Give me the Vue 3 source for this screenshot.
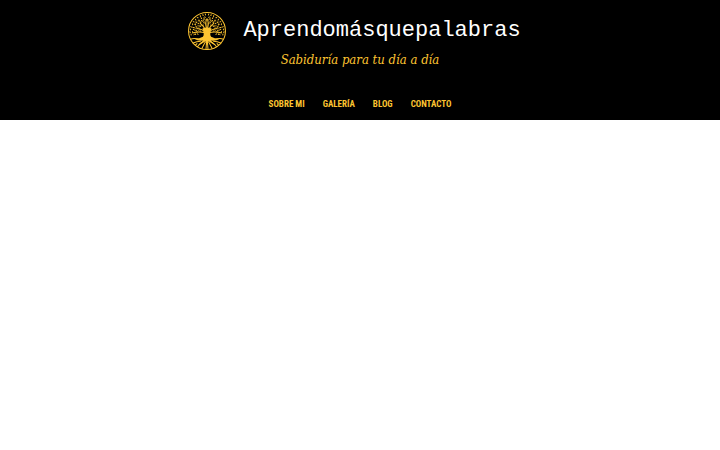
<template>
  <header class="header">
    <div class="brand">
      <svg class="logo" viewBox="0 0 78 78" role="img" aria-label="Árbol">
        <circle cx="39" cy="39" r="36" class="ring" />
        <path class="trunk" d="M30 34 Q39 30 48 34 Q43 45 47 50 Q53 54 64 54 Q54 60 46 57 Q51 61 56 67 Q47 63 42 59 L40 66 L38 66 L36 59 Q31 63 22 67 Q26 61 32 57 Q24 60 14 54 Q25 54 31 50 Q35 45 30 34Z" />
        <g v-for="side in sides" :key="side" :transform="side">
          <path class="branch" d="M37 43 Q31 35 19 34 M37 38 Q32 29 25 23 M38 35 Q35 24 38 15 M36 43 Q25 39 10 43" />
          <path class="twig" d="M37 25 L31 17 M37 19 L32 12 M30 28 L20 28 M27 25 L23 16 M25 35 L16 28 M20 35 L9 31 M22 41 L13 37 M20 41 L12 47 M33 32 L31 25 M25 36 L20 40 M33 19 L29 21 M20 21 L15 25 M23 29 L24 32" />
          <path class="root" d="M24 56 Q15 52 7 55 M27 59 Q19 59 11 63 M29 62 Q22 66 20 70 M36 60 Q32 67 29 73 M38 62 L37 75 M20 63 L16 67" />
          <g class="leaves">
            <ellipse v-for="leaf in leaves" :key="leaf.join()" :cx="leaf[0]" :cy="leaf[1]" rx="2" ry="1" :transform="`rotate(${leaf[2]} ${leaf[0]} ${leaf[1]})`" />
          </g>
        </g>
      </svg>
      <h1 class="title">Aprendomásquepalabras</h1>
    </div>
    <p class="slogan">Sabiduría para tu día a día</p>
    <nav class="menu">
      <a v-for="link in links" :key="link.href" :href="link.href">{{ link.text }}</a>
    </nav>
  </header>
</template>

<script setup>
const links = [
  { text: 'SOBRE MI', href: '#sobre-mi' },
  { text: 'GALERÍA', href: '#galeria' },
  { text: 'BLOG', href: '#blog' },
  { text: 'CONTACTO', href: '#contacto' },
];

// La copa y las raíces se repiten en espejo
const sides = ['translate(0 0)', 'translate(78 0) scale(-1 1)'];

// x, y, giro de cada hoja
const leaves = [
  [36, 7, 70], [31, 8, 20], [26, 10, 80], [21, 13, 10], [17, 17, 60], [35, 12, 30],
  [28, 14, 50], [23, 19, 0], [18, 22, 70], [13, 21, 20], [11, 26, 80], [16, 26, 10],
  [33, 16, 80], [29, 19, 20], [33, 23, 60], [8, 31, 30], [13, 32, 0], [18, 31, 60],
  [26, 30, 20], [7, 36, 80], [13, 36, 20], [18, 38, 50], [26, 39, 0], [6, 41, 20],
  [11, 41, 60], [8, 46, 80], [16, 46, 0], [21, 45, 30], [22, 24, 40], [27, 22, 90],
];
</script>

<style>
body {
  margin: 0;
  background-color: #fff;
}
</style>

<style scoped>
.header {
  display: flex;
  flex-direction: column;
  align-items: center;
  background-color: #000;
  padding: 11px 20px 9px;
}

.brand {
  display: flex;
  align-items: center;
  gap: 16px;
  margin-right: 12px;
}

.logo {
  width: 40px;
  height: 40px;
  flex-shrink: 0;
}

.ring,
.branch,
.twig,
.root {
  fill: none;
  stroke: #fdc431;
}

.ring,
.branch,
.root {
  stroke-width: 2;
}

.twig {
  stroke-width: 1;
}

.trunk,
.leaves {
  fill: #fdc431;
}

.title {
  margin: 0;
  color: #fff;
  font-family: "Courier New", "Liberation Mono", monospace;
  font-size: 22px;
  font-weight: 400;
  line-height: 40px;
}

.slogan {
  margin: 0;
  color: #fdc431;
  font-family: "Roboto Slab", "DejaVu Serif Condensed", "DejaVu Serif", serif;
  font-size: 13px;
  font-style: italic;
  line-height: 18px;
}

.menu {
  display: flex;
  flex-wrap: wrap;
  justify-content: center;
  gap: 18px;
  margin-top: 28px;
}

.menu a {
  color: #fdc431;
  font-family: "Roboto Condensed", Roboto, sans-serif;
  font-size: 9px;
  font-weight: 700;
  line-height: 14px;
  text-decoration: none;
}

.menu a:hover {
  color: #fff;
}
</style>
